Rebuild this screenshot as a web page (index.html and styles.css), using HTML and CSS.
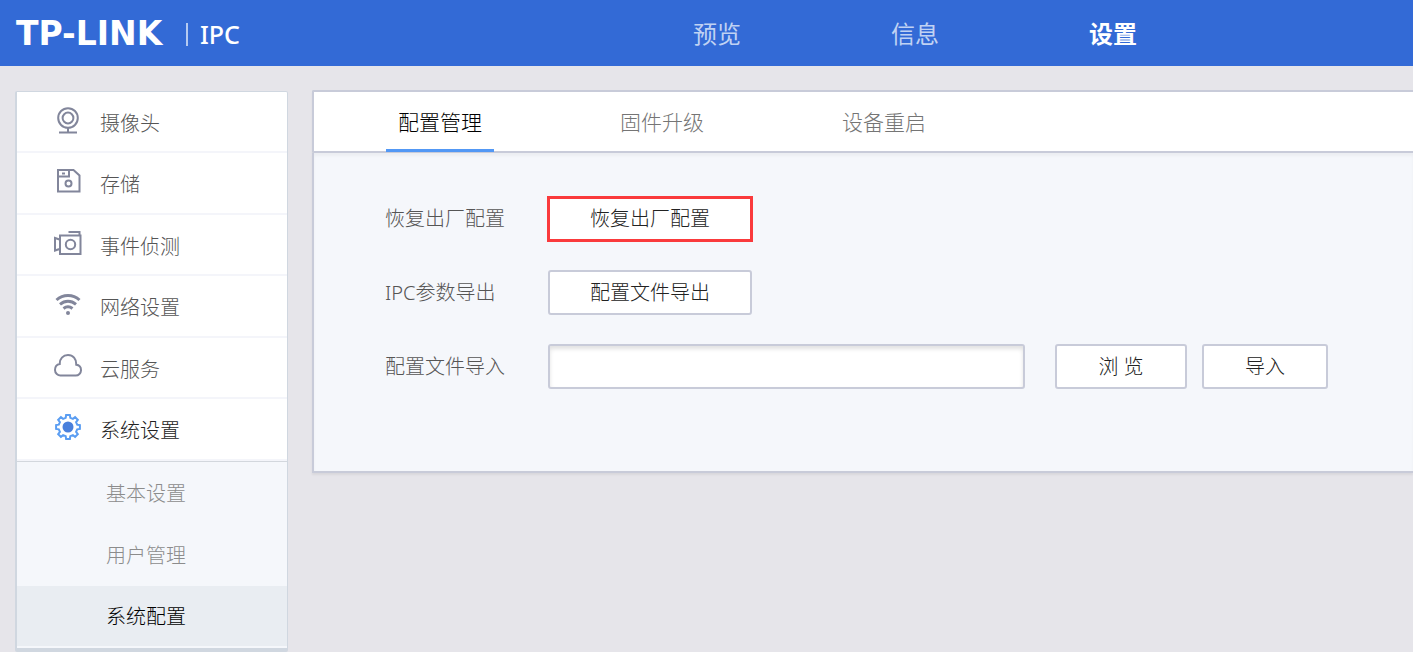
FILE: index.html
```html
<!DOCTYPE html>
<html lang="zh-CN">
<head>
  <meta charset="UTF-8">
  <meta name="viewport" content="width=device-width, initial-scale=1.0">
  <title>TP-LINK IPC</title>
  <link rel="stylesheet" href="styles.css">
</head>
<body>
  <header class="header">
    <div class="logo">
      <span class="brand">TP-LINK</span>
      <span class="product">IPC</span>
    </div>
    <nav class="top-nav">
      <a href="#preview">预览</a>
      <a href="#info">信息</a>
      <a href="#settings" class="active">设置</a>
    </nav>
  </header>

  <div class="container">
    <aside class="sidebar">
      <ul class="menu">
        <li>
          <a href="#camera">
            <svg class="icon" viewBox="0 0 28 28"><circle cx="14" cy="12" r="9.8"/><circle cx="14" cy="12" r="5.4"/><path d="M14 22v4M5 26.5h18"/></svg>
            摄像头
          </a>
        </li>
        <li>
          <a href="#storage">
            <svg class="icon" viewBox="0 0 28 28"><path d="M4 3h15.500l6 5.500v16h-21.500zM4 9.500h11v-6.500M8 6.500h3"/><circle cx="14.500" cy="16.500" r="3"/></svg>
            存储
          </a>
        </li>
        <li>
          <a href="#event">
            <svg class="icon" viewBox="0 0 28 28"><path d="M6 6.500h20.500v18.500h-20.500zM5.500 10.500l-4.500-1.500v12.500l4.500-1.500M14.500 3h11v3"/><circle cx="16.500" cy="15.500" r="4.700"/></svg>
            事件侦测
          </a>
        </li>
        <li>
          <a href="#network">
            <svg class="icon wifi" viewBox="0 0 28 28"><path d="M2.500 10c6.500-6 16.500-6 23 0M6 14.300c4.800-4 11.200-4 16 0M9.500 18.500c2.800-2.200 6.200-2.200 9 0"/><circle class="dot" cx="14" cy="23" r="2"/></svg>
            网络设置
          </a>
        </li>
        <li>
          <a href="#cloud">
            <svg class="icon" viewBox="0 0 28 28"><path d="M7 23.500h14.500a5.300 5.300 0 0 0 5.500-5.500c0-3-2-5-4.800-5.300C22.500 7 19 3 14 3S5.500 7 5.800 12C3 12.500 1 15 1 18a5.500 5.500 0 0 0 6 5.500z"/></svg>
            云服务
          </a>
        </li>
        <li class="current">
          <a href="#system">
            <svg class="icon gear" viewBox="0 0 28 28"><path d="M23.200 11.700L25.900 12.100V15.900L23.200 16.300L22.100 18.900L23.800 21.100L21.100 23.800L18.900 22.100L16.300 23.200L15.900 25.900H12.100L11.700 23.200L9.100 22.100L6.900 23.800L4.200 21.100L5.900 18.900L4.800 16.300L2.100 15.900V12.100L4.800 11.700L5.900 9.100L4.200 6.900L6.900 4.200L9.100 5.900L11.700 4.800L12.100 2.100H15.900L16.300 4.800L18.900 5.900L21.100 4.200L23.800 6.900L22.100 9.100z"/><circle class="dot" cx="14" cy="14" r="5.500"/></svg>
            系统设置
          </a>
        </li>
      </ul>
      <ul class="submenu">
        <li><a href="#basic">基本设置</a></li>
        <li><a href="#users">用户管理</a></li>
        <li><a href="#config" class="active">系统配置</a></li>
      </ul>
    </aside>

    <main class="content">
      <nav class="tabs">
        <a href="#manage" class="active">配置管理</a>
        <a href="#firmware">固件升级</a>
        <a href="#reboot">设备重启</a>
      </nav>
      <form class="panel">
        <div class="form-row">
          <label for="resetBtn">恢复出厂配置</label>
          <button type="button" id="resetBtn" class="btn btn-wide btn-mark">恢复出厂配置</button>
        </div>
        <div class="form-row">
          <label for="exportBtn">IPC参数导出</label>
          <button type="button" id="exportBtn" class="btn btn-wide">配置文件导出</button>
        </div>
        <div class="form-row">
          <label for="filePath">配置文件导入</label>
          <input type="text" id="filePath" class="file-path">
          <button type="button" class="btn btn-browse">浏 览</button>
          <button type="button" class="btn btn-import">导入</button>
        </div>
      </form>
    </main>
  </div>
</body>
</html>
```

FILE: styles.css
```css
:root {
  --primary: #336ad6;
  --accent: #5298f5;
  --bg: #e6e5ea;
  --panel: #f5f7fb;
  --border: #c8cbd9;
  --side-border: #d0d7e0;
  --icon: #82869b;
}

* {
  box-sizing: border-box;
}

body {
  margin: 0;
  background: var(--bg);
  color: #555;
  font-family: "Noto Sans", "Noto Sans CJK SC", sans-serif;
  font-size: 20px;
  font-weight: 300;
  line-height: 28px;
}

a {
  color: inherit;
  text-decoration: none;
}

ul {
  list-style: none;
  margin: 0;
  padding: 0;
}

/* header */
.header {
  display: flex;
  align-items: center;
  justify-content: space-between;
  height: 66px;
  padding: 2px 201px 0 16px;
  background: var(--primary);
  color: #fff;
}

.logo {
  display: flex;
  align-items: center;
}

.brand {
  width: 170px;
  font-family: "DejaVu Sans", sans-serif;
  font-size: 33px;
  font-weight: bold;
}

.product {
  padding-left: 12px;
  border-left: 2px solid #b5caf1;
  font-size: 25px;
  font-weight: 500;
  line-height: 23px;
}

.top-nav {
  display: flex;
}

.top-nav a {
  width: 198px;
  text-align: center;
  color: #c0d2f3;
  font-size: 24px;
  font-weight: 400;
}

.top-nav .active {
  color: #fff;
  font-weight: bold;
}

.container {
  display: flex;
  align-items: flex-start;
  gap: 24px;
  padding: 24px 0 0 15px;
}

/* sidebar */
.sidebar {
  flex: 0 0 273px;
  margin-top: 1px;
  border: 2px solid var(--side-border);
  border-width: 1px 1px 4px 2px;
  border-radius: 2px;
  background: #fff;
}

.menu li {
  height: 61px;
  border-bottom: 2px solid #f4f5fa;
}

.menu li:nth-child(even) {
  height: 62px;
}

.menu a {
  display: flex;
  align-items: center;
  gap: 18px;
  height: 100%;
  padding: 4px 0 0 37px;
}

.menu .current {
  color: #222;
}

.icon {
  width: 28px;
  height: 28px;
  margin-bottom: 8px;
  fill: none;
  stroke: var(--icon);
  stroke-width: 2;
}

.icon .dot {
  fill: var(--icon);
  stroke: none;
}

.icon.wifi {
  stroke-width: 3;
}

.icon.gear {
  stroke: #5a9df2;
}

.icon.gear .dot {
  fill: #4a80dc;
}

.submenu {
  padding-bottom: 2px;
  border-top: 1px solid #d3d7dd;
  background: var(--panel);
  color: #8c8c8c;
}

.submenu a {
  display: flex;
  align-items: center;
  height: 62px;
  padding: 2px 0 0 89px;
}

.submenu .active {
  height: 60px;
  background: #e9edf2;
  color: #000;
}

/* content */
.content {
  flex: 1;
}

.tabs {
  display: flex;
  gap: 114px;
  height: 63px;
  padding-left: 72px;
  border: 2px solid var(--border);
  border-right: 0;
  border-radius: 2px 0 0 2px;
  background: #fff;
  box-shadow: 0 2px 2px rgba(0, 0, 0, 0.06);
  color: #757575;
  font-size: 21px;
}

.tabs a {
  width: 108px;
  padding-top: 16px;
  text-align: center;
}

.tabs .active {
  margin-bottom: -1px;
  border-bottom: 3px solid var(--accent);
  color: #000;
}

.panel {
  display: flex;
  flex-direction: column;
  gap: 29px;
  padding: 44px 71px 82px;
  border: 2px solid var(--border);
  border-width: 0 0 2px 2px;
  background: var(--panel);
  box-shadow: inset 0 3px 3px rgba(0, 0, 0, 0.04), 0 2px 2px rgba(0, 0, 0, 0.06);
}

.form-row {
  display: flex;
  align-items: center;
}

.form-row label {
  width: 163px;
}

.btn,
.file-path {
  height: 45px;
  border: 2px solid var(--border);
  border-radius: 3px;
  background: #fff;
  color: #222;
  font: inherit;
}

.btn {
  padding: 0;
  cursor: pointer;
}

.btn-wide {
  width: 204px;
}

.btn-mark {
  height: 44px;
  border-color: #fa3a3c;
  border-radius: 0;
  outline: 1px solid #fa3a3c;
}

.file-path {
  width: 477px;
  padding: 0 10px;
  box-shadow: inset 0 3px 4px rgba(0, 0, 0, 0.12);
}

.btn-browse {
  width: 132px;
  margin-left: 30px;
}

.btn-import {
  width: 126px;
  margin-left: 15px;
}
```
